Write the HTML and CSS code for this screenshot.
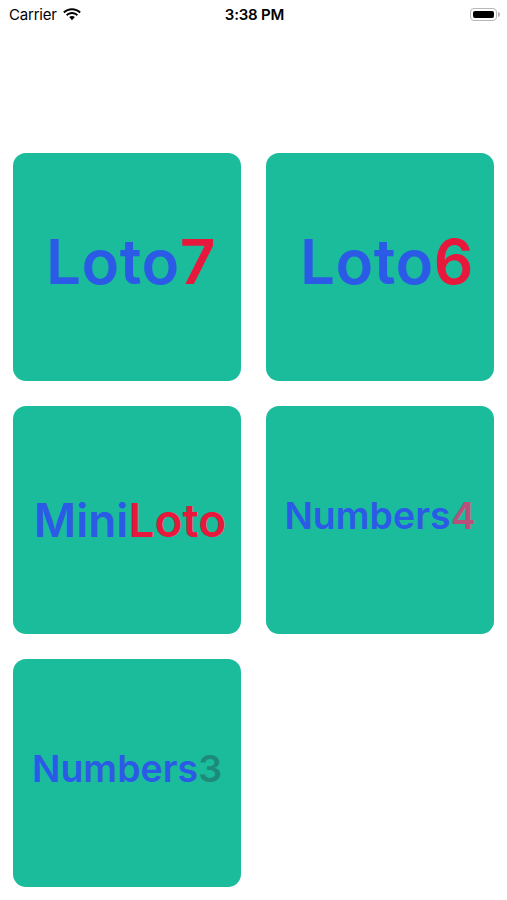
FILE: index.html
```html
<!DOCTYPE html>
<html lang="ja">
<head>
    <meta charset="UTF-8">
    <meta name="viewport" content="width=device-width, initial-scale=1.0">
    <title>Loto</title>
    <link rel="stylesheet" href="styles.css">
</head>
<body>
    <div id="status-bar">
        <div class="carrier">
            Carrier
            <svg class="wifi" width="18" height="13" viewBox="0 0 18 13">
                <path d="M9 2.2c2.9 0 5.5 1.1 7.5 3l1.3-1.4C15.5 1.6 12.4.3 9 .3S2.5 1.6.2 3.8l1.3 1.4c2-1.9 4.6-3 7.5-3z" fill="#000"/>
                <path d="M9 6.1c1.8 0 3.4.7 4.7 1.8l1.3-1.4C13.4 5 11.3 4.1 9 4.1S4.6 5 3 6.5l1.3 1.4C5.6 6.8 7.2 6.1 9 6.1z" fill="#000"/>
                <path d="M9 8.1c-1.1 0-2 .4-2.8 1L9 12.2l2.8-3.1c-.8-.6-1.7-1-2.8-1z" fill="#000"/>
            </svg>
        </div>
        <div class="time">3:38 PM</div>
        <div class="battery">
            <span class="battery-body"><span class="battery-level"></span></span>
            <span class="battery-cap"></span>
        </div>
    </div>

    <ul id="game-list">
        <li class="game loto"><span class="blue">Loto</span><span class="red">7</span></li>
        <li class="game loto six"><span class="blue">Loto</span><span class="red">6</span></li>
        <li class="game mini"><span class="blue">Mini</span><span class="red">Loto</span></li>
        <li class="game numbers"><span class="blue">Numbers</span><span class="pink">4</span></li>
        <li class="game numbers"><span class="blue">Numbers</span><span class="teal">3</span></li>
    </ul>
</body>
</html>
```

FILE: styles.css
```css
*{
    margin:0;
    padding:0;
    box-sizing:border-box;
}
ul{
    list-style:none;
}
body{
    background:#fff;
    font-family:Inter, "Noto Sans", sans-serif;
    width:507px;
}
#status-bar{
    height:28px;
    display:flex;
    align-items:center;
    justify-content:space-between;
    padding:0 7px 0 9px;
    font-size:15px;
    color:#000;
}
#status-bar .carrier{
    display:flex;
    align-items:center;
    gap:6px;
    width:90px;
    font-weight:400;
    letter-spacing:-0.2px;
}
#status-bar .time{
    font-weight:600;
    letter-spacing:-0.2px;
}
#status-bar .battery{
    width:90px;
    display:flex;
    justify-content:flex-end;
    align-items:center;
}
.battery-body{
    display:flex;
    width:27px;
    height:13px;
    border:1px solid #b8b8b8;
    border-radius:4px;
    padding:2px;
}
.battery-level{
    flex:1;
    background:#000;
    border-radius:2px;
}
.battery-cap{
    width:2px;
    height:5px;
    margin-left:1px;
    background:#b8b8b8;
    border-radius:0 2px 2px 0;
}
#game-list{
    display:grid;
    grid-template-columns:228px 228px;
    grid-auto-rows:228px;
    gap:25px;
    padding:125px 13px 0;
}
.game{
    background:#1bbc9b;
    border-radius:13px;
    display:flex;
    align-items:center;
    justify-content:center;
    font-weight:600;
    line-height:1;
}
.game.loto{
    font-size:62px;
    letter-spacing:0.5px;
    padding:0 0 10px 8px;
}
.game.six{
    padding-left:14px;
}
.game.mini{
    font-size:46px;
    padding-left:6px;
}
.game.numbers{
    font-size:37.5px;
    padding-bottom:8px;
}
.blue{
    color:#2b5be6;
}
.red{
    color:#e8173c;
}
.pink{
    color:#b9507c;
}
.teal{
    color:#1d8a7a;
}
```
